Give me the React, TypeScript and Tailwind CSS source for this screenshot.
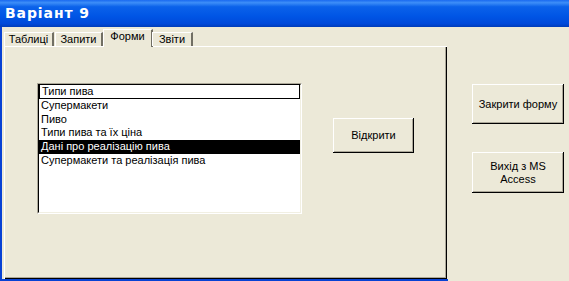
import React from "react";

const items = [
  "Типи пива",
  "Супермакети",
  "Пиво",
  "Типи пива та їх ціна",
  "Дані про реалізацію пива",
  "Супермакети та реалізація пива",
];

const tabs = ["Таблиці", "Запити", "Форми", "Звіти"];

function XPButton({ children, className }: { children: React.ReactNode; className: string }) {
  return (
    <div
      className={
        "flex items-center justify-center text-center text-[11px] leading-[13px] text-black bg-[#ECE9D8] shadow-[inset_-1px_-1px_0_#000,inset_1px_1px_0_#fff,inset_-2px_-2px_0_#aca899] " +
        className
      }
    >
      {children}
    </div>
  );
}

export default function App() {
  return (
    <div
      className="w-[569px] h-[281px] bg-[#ECE9D8] overflow-hidden flex flex-col"
      style={{ fontFamily: '"Liberation Sans", Arial, sans-serif' }}
    >
      <div
        className="h-[27px] shrink-0 flex items-center pl-[5px] pb-[1px] text-white font-bold text-[14px] tracking-[0.9px] bg-[linear-gradient(to_bottom,#1a6af0_0%,#3d8ef8_10%,#0b62ea_25%,#0055e5_60%,#0049da_88%,#003cb8_100%)]"
        style={{ fontFamily: '"DejaVu Sans", Verdana, sans-serif' }}
      >
        Варіант 9
      </div>
      <div className="flex flex-1 min-h-0">
        <div className="w-[448px] shrink-0 border-l-2 border-b-2 border-[#0842d4] pl-[2px] flex flex-col">
          <div className="h-[19px] shrink-0 flex items-end relative z-10">
            {tabs.map((t, i) => {
              const active = i === 2;
              const widths = ["w-[50px]", "w-[48px]", "w-[50px]", "w-[41px]"];
              return (
                <div
                  key={t}
                  className={
                    "flex justify-center text-[11px] text-black border-l border-t border-white border-r-[2px] border-r-[#716f64] " +
                    widths[i] +
                    (active
                      ? " h-[18px] -mb-px bg-[#ECE9D8] items-start pt-0 leading-[13px] -mx-px"
                      : " h-[14px] items-center leading-[13px] mr-px")
                  }
                >
                  {t}
                </div>
              );
            })}
          </div>
          <div className="flex-1 w-[443px] border-l border-t border-white shadow-[inset_-1px_-1px_0_#000,inset_-2px_-2px_0_#aca899] flex items-start pl-[32px] pt-[36px]">
            <div className="w-[265px] h-[131px] bg-white border-l border-t border-[#aca899] border-r border-b border-r-white border-b-white">
              <div className="w-full h-full border-l border-t border-black border-r border-b border-r-[#f1efe2] border-b-[#f1efe2] text-[11px] text-black">
                {items.map((it, i) => (
                  <div
                    key={it}
                    className={
                      "h-[13.75px] leading-[13px] pl-[2px] whitespace-nowrap " +
                      (i === 0 ? "border border-black border-t-0 " : "") +
                      (i === 4 ? "bg-black text-white" : "")
                    }
                  >
                    {it}
                  </div>
                ))}
              </div>
            </div>
            <XPButton className="w-[81px] h-[35px] ml-[31px] mt-[35px]">Відкрити</XPButton>
          </div>
        </div>
        <div className="flex-1 flex flex-col pl-[24px] pt-[57px]">
          <XPButton className="w-[92px] h-[40px]">Закрити форму</XPButton>
          <XPButton className="w-[92px] h-[41px] mt-[28px]">
            Вихід з MS
            <br />
            Access
          </XPButton>
        </div>
      </div>
    </div>
  );
}
